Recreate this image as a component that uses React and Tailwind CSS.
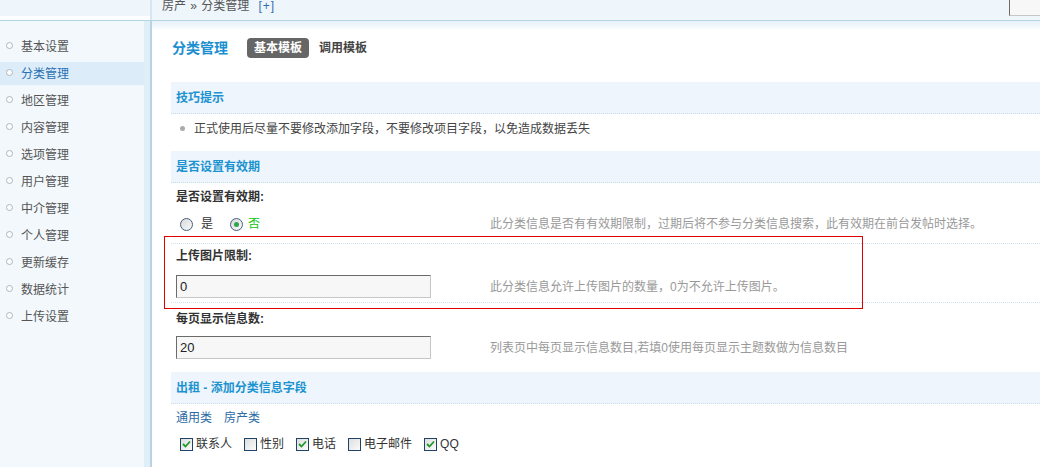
import React from 'react'

const menu = ['基本设置', '分类管理', '地区管理', '内容管理', '选项管理', '用户管理', '中介管理', '个人管理', '更新缓存', '数据统计', '上传设置']

function SectionHead({ children }) {
  return (
    <div className="h-[32px] bg-[#eef5fc] border-b border-dotted border-[#c9dcec] pl-[5px] flex items-center text-[12px] font-bold text-[#1b93d0]">
      {children}
    </div>
  )
}

function Radio({ checked }) {
  return (
    <span className="w-[13px] h-[13px] rounded-full border border-[#42607f] bg-gradient-to-br from-[#d9d9d9] to-[#fafafa] flex items-center justify-center">
      {checked && <span className="w-[5px] h-[5px] rounded-full bg-[#2ea44f]" />}
    </span>
  )
}

function Check({ checked, label }) {
  return (
    <label className="flex items-center gap-[3px] mr-[12px]">
      <span className="w-[13px] h-[13px] border border-[#1f4267] bg-gradient-to-br from-[#dedede] to-[#fbfbfb] flex items-center justify-center">
        {checked && (
          <svg width="9" height="8" viewBox="0 0 9 8">
            <path d="M1 4 L3.5 6.5 L8 1.5" fill="none" stroke="#1f9a2a" strokeWidth="1.8" />
          </svg>
        )}
      </span>
      <span>{label}</span>
    </label>
  )
}

function Input({ value }) {
  return (
    <div className="w-[255px] h-[23px] bg-[#f7f7f7] border border-t-[#6b6b6b] border-l-[#6b6b6b] border-b-[#c6c6c6] border-r-[#c6c6c6] flex items-center pl-[3px] text-[13px] text-[#222]">
      {value}
    </div>
  )
}

export default function App() {
  return (
    <div className="w-[1040px] h-[467px] overflow-hidden bg-white font-['Liberation_Sans','Noto_Sans_CJK_SC',sans-serif] text-[12px] leading-[18px] text-[#333]">
      {/* top bar */}
      <div className="flex h-[20px]">
        <div className="w-[150px] bg-[#eef6fb] border-b-[4px] border-white" />
        <div className="w-[2px] bg-[#d6e7f1]" />
        <div className="flex-1 bg-[#eef6fb] flex items-start pl-[10px] text-[#555] leading-[13px]">
          <span>房产 <span className="mx-[1px]">»</span> 分类管理</span>
          <span className="ml-[9px] text-[#2f6db0] tracking-[1px]">[+]</span>
          <div className="ml-auto w-[31px] h-[16px] bg-[#f7f7f7] border-l border-b border-l-[#6b6b6b] border-b-[#c6c6c6]" />
        </div>
      </div>
      <div className="h-[1px] bg-[#b3d4e3]" />

      <div className="flex h-[446px]">
        {/* sidebar */}
        <div className="w-[144px] bg-[#f2f8fc] pt-[14px] flex flex-col gap-[4px]">
          {menu.map((m) => {
            const active = m === '分类管理'
            return (
              <div key={m} className={`h-[23px] flex items-center pl-[6px] ${active ? 'bg-[#dcecf8] text-[#2a70b5]' : 'text-[#555]'}`}>
                <span className="w-[7px] h-[7px] rounded-full border border-[#aeb6bc] bg-white mr-[8px] mb-[2px]" />
                <span>{m}</span>
              </div>
            )
          })}
        </div>
        <div className="w-[6px] bg-[#e0eef8]" />
        <div className="w-[2px] bg-[#b8d4e2]" />

        {/* content */}
        <div className="flex-1 relative bg-gradient-to-b from-[#e6f1f8] to-white to-[10px] pl-[19px]">
          <div className="flex items-center pt-[17px] h-[37px]">
            <span className="text-[14px] font-bold text-[#1b8fd0] ml-[1px]">分类管理</span>
            <span className="ml-[19px] h-[20px] w-[62px] rounded-[4px] bg-[#666] text-white font-bold flex items-center justify-center">基本模板</span>
            <span className="ml-[10px] font-bold text-[#444]">调用模板</span>
          </div>

          <div className="mt-[24px]">
            <SectionHead>技巧提示</SectionHead>
            <div className="h-[37px] pt-[6px] pl-[9px] flex items-start">
              <span className="w-[5px] h-[5px] rounded-full bg-[#aaa] mt-[6px] mr-[9px]" />
              <span className="text-[#444]">正式使用后尽量不要修改添加字段，不要修改项目字段，以免造成数据丢失</span>
            </div>

            <SectionHead>是否设置有效期</SectionHead>
            <div className="px-[5px] pt-[5px] pb-[10px] border-b border-dotted border-[#cfe0ee]">
              <div className="font-bold h-[18px]">是否设置有效期:</div>
              <div className="mt-[9px] flex items-center h-[18px]">
                <div className="w-[314px] flex items-center pl-[4px]">
                  <Radio />
                  <span className="ml-[8px]">是</span>
                  <span className="ml-[17px]"><Radio checked /></span>
                  <span className="ml-[5px] text-[#11c311]">否</span>
                </div>
                <span className="text-[#999]">此分类信息是否有有效期限制，过期后将不参与分类信息搜索，此有效期在前台发帖时选择。</span>
              </div>
            </div>

            <div className="px-[5px] pt-[3px] pb-[4px] border-b border-dotted border-[#cfe0ee]">
              <div className="font-bold h-[18px]">上传图片限制:</div>
              <div className="mt-[10px] flex items-center">
                <div className="w-[314px]"><Input value="0" /></div>
                <span className="text-[#999]">此分类信息允许上传图片的数量，0为不允许上传图片。</span>
              </div>
            </div>

            <div className="px-[5px] pt-[7px] pb-[13px]">
              <div className="font-bold h-[18px]">每页显示信息数:</div>
              <div className="mt-[8px] flex items-center">
                <div className="w-[314px]"><Input value="20" /></div>
                <span className="text-[#999]">列表页中每页显示信息数目,若填0使用每页显示主题数做为信息数目</span>
              </div>
            </div>

            <SectionHead>出租 - 添加分类信息字段</SectionHead>
            <div className="px-[5px] pt-[5px] text-[#2c6aa6] flex gap-[12px]">
              <span>通用类</span>
              <span>房产类</span>
            </div>
            <div className="pl-[9px] mt-[8px] flex items-center">
              <Check checked label="联系人" />
              <Check label="性别" />
              <Check checked label="电话" />
              <Check label="电子邮件" />
              <Check checked label="QQ" />
            </div>
          </div>

          {/* annotation box */}
          <div className="absolute left-[12px] top-[215px] w-[699px] h-[73px] border border-[#e00000]" />
        </div>
      </div>
    </div>
  )
}
